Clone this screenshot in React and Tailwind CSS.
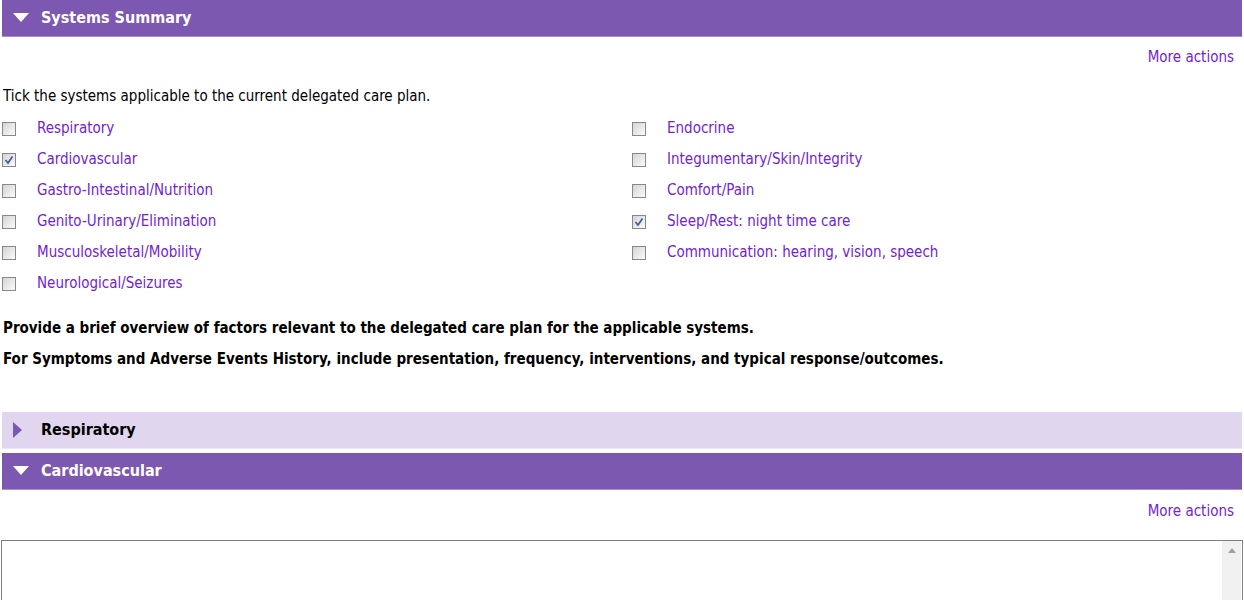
import React from "react";

const leftItems = [
  { label: "Respiratory", checked: false },
  { label: "Cardiovascular", checked: true },
  { label: "Gastro-Intestinal/Nutrition", checked: false },
  { label: "Genito-Urinary/Elimination", checked: false },
  { label: "Musculoskeletal/Mobility", checked: false },
  { label: "Neurological/Seizures", checked: false },
];

const rightItems = [
  { label: "Endocrine", checked: false },
  { label: "Integumentary/Skin/Integrity", checked: false },
  { label: "Comfort/Pain", checked: false },
  { label: "Sleep/Rest: night time care", checked: true },
  { label: "Communication: hearing, vision, speech", checked: false },
];

const Box = ({ checked }) => (
  <span className="w-[14px] h-[14px] border border-[#888] bg-gradient-to-br from-[#d4d4d4] to-[#fbfbfb] flex items-center justify-center shrink-0">
    {checked && (
      <svg width="10" height="10" viewBox="0 0 10 10">
        <path d="M1.5 5 L4 8 L8.5 1.5" fill="none" stroke="#3d5f9c" strokeWidth="1.7" />
      </svg>
    )}
  </span>
);

const CheckRow = ({ label, checked }) => (
  <div className="h-[31px] flex items-center">
    <div className="w-[37px] pl-[2px] flex items-center">
      <Box checked={checked} />
    </div>
    <span className="text-[#7222d4]">{label}</span>
  </div>
);

const Bar = ({ title, open }) => (
  <div
    className={`h-[37px] mx-[2px] flex items-center border-b ${
      open ? "bg-[#7d58b0] border-[#a98cd0] text-white" : "bg-[#e0d6ed] border-[#ece6f4] text-black"
    }`}
  >
    <div className="w-[37px] flex justify-center">
      {open ? (
        <svg width="16" height="10" viewBox="0 0 16 10">
          <path d="M0 0 H16 L8 9 Z" fill="#fff" />
        </svg>
      ) : (
        <svg width="10" height="16" viewBox="0 0 10 16" className="ml-[-6px]">
          <path d="M0 0 L9 8 L0 16 Z" fill="#7d58b0" />
        </svg>
      )}
    </div>
    <span className="font-bold text-[16px] pl-[2px]">{title}</span>
  </div>
);

const MoreActions = ({ extra }) => (
  <div
    className={`h-[38px] flex justify-end items-center pr-[10px] text-[#7222d4] ${extra ? "pt-[4px]" : "pt-[2px]"}`}
  >
    More actions
  </div>
);

export default function App() {
  return (
    <div className="bg-white w-[1244px] h-[600px] overflow-hidden text-[15px] text-black font-['DejaVu_Sans_Condensed','DejaVu_Sans',sans-serif]">
      <Bar title="Systems Summary" open />
      <MoreActions />
      <div className="pl-[3px] h-[20px] flex items-center mt-[11px]">
        Tick the systems applicable to the current delegated care plan.
      </div>
      <div className="grid grid-cols-[630px_1fr] mt-[7px]">
        <div>
          {leftItems.map((it) => (
            <CheckRow key={it.label} {...it} />
          ))}
        </div>
        <div>
          {rightItems.map((it) => (
            <CheckRow key={it.label} {...it} />
          ))}
        </div>
      </div>
      <div className="pl-[3px] font-bold mt-[19px]">
        <div className="h-[20px] flex items-center">
          Provide a brief overview of factors relevant to the delegated care plan for the applicable systems.
        </div>
        <div className="h-[20px] flex items-center mt-[11px]">
          For Symptoms and Adverse Events History, include presentation, frequency, interventions, and typical response/outcomes.
        </div>
      </div>
      <div className="mt-[43px]">
        <Bar title="Respiratory" />
      </div>
      <div className="mt-[4px]">
        <Bar title="Cardiovascular" open />
      </div>
      <MoreActions extra />
      <div className="mt-[12px] mx-[1px] h-[80px] border border-[#7f7f7f] flex justify-end">
        <div className="w-[19px] mr-[1px] bg-[#f0f0f0] flex justify-center pt-[7px]">
          <svg width="8" height="5" viewBox="0 0 8 5">
            <path d="M0 5 L4 0 L8 5 Z" fill="#a0a0a0" />
          </svg>
        </div>
      </div>
    </div>
  );
}
